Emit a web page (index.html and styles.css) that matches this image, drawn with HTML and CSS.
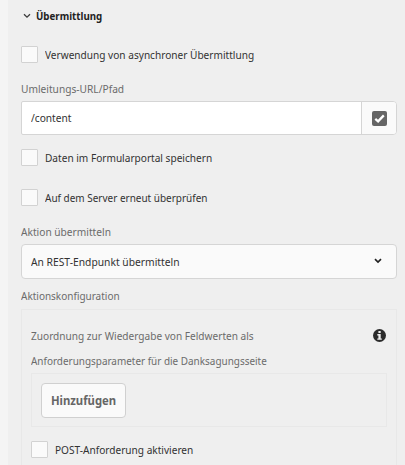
FILE: index.html
```html
<!DOCTYPE html>
<html lang="de">
<head>
<meta charset="utf-8">
<title>Übermittlung</title>
<link rel="stylesheet" href="styles.css">
</head>
<body>
<main class="panel">
  <h2 class="heading"><svg class="chevron" viewBox="0 0 8 6"><path d="M1 1.2 4 4.2 7 1.2"/></svg><span class="text t-head">Übermittlung</span></h2>
  <label class="check"><span class="box"></span><span class="text t-async">Verwendung von asynchroner Übermittlung</span></label>
  <div class="label url-label"><span class="text t-url">Umleitungs-URL/Pfad</span></div>
  <div class="field">
    <div class="value"><span class="text t-content">/content</span></div>
    <div class="picker"><svg viewBox="0 0 15 15"><rect width="15" height="15" rx="2" fill="#656565"/><path d="M3.3 7.9 6.1 10.4 11.8 4.4" fill="none" stroke="#fff" stroke-width="2.3"/></svg></div>
  </div>
  <label class="check portal"><span class="box"></span><span class="text t-portal">Daten im Formularportal speichern</span></label>
  <label class="check server"><span class="box"></span><span class="text t-server">Auf dem Server erneut überprüfen</span></label>
  <div class="label action-label"><span class="text t-action">Aktion übermitteln</span></div>
  <div class="select"><span class="text t-rest">An REST-Endpunkt übermitteln</span><svg class="arrow" viewBox="0 0 8 6"><path d="M1 1.2 4 4 7 1.2"/></svg></div>
  <div class="label config-label"><span class="text t-config">Aktionskonfiguration</span></div>
  <section class="config">
    <div class="mapping">
      <div class="mapping-text"><span class="text t-map1">Zuordnung zur Wiedergabe von Feldwerten als</span><br><span class="text t-map2">Anforderungsparameter für die Danksagungsseite</span></div>
      <svg class="info" viewBox="0 0 13 13"><circle cx="6.5" cy="6.5" r="6.5" fill="#2b2b2b"/><path d="M5.4 2h2.3v2H5.4zM4.3 5.1h3.4v4.3h1.1v1.4H4.3V9.4h1.1V6.5H4.3z" fill="#efefef"/></svg>
    </div>
    <div class="multi"><button class="add"><span class="text t-add">Hinzufügen</span></button></div>
    <label class="check post"><span class="box"></span><span class="text t-post">POST-Anforderung aktivieren</span></label>
  </section>
</main>
</body>
</html>
```
FILE: styles.css
```css
* { box-sizing: border-box; }
body {
  margin: 0;
  height: 465px;
  overflow: hidden;
  background: #f4f4f4;
  font: 11px/16px "Noto Sans", sans-serif;
  color: #323232;
}
svg { display: block; flex: none; }
.panel {
  margin-left: 8px;
  height: 465px;
  overflow: hidden;
  padding: 8px 8px 0 13px;
  background: #efefef;
}

/* Condensed text */
.text { display: inline-block; white-space: nowrap; transform: scaleX(.918); transform-origin: 0 50%; }
.t-head { transform: scaleX(.885); }
.t-url, .t-content, .t-action { transform: scaleX(.925); }
.t-server, .t-config { transform: scaleX(.907); }
.t-rest { transform: scaleX(.935); }
.t-map2 { transform: scaleX(.903); }
.t-add { transform: scaleX(.87); transform-origin: 50% 50%; }

.heading { display: flex; align-items: center; height: 16px; margin: 0; padding-left: 2px; font-size: 11px; color: #222; }
.chevron { width: 8px; height: 6px; margin-right: 5px; }
.chevron path, .arrow path { fill: none; stroke: #3c3c3c; stroke-width: 1.3; }
.check { display: flex; align-items: center; gap: 7px; height: 17px; }
.box { flex: none; width: 17px; height: 17px; border: 1px solid #d2d2d2; border-radius: 1px; background: #fafafa; }
.heading + .check { margin-top: 22px; }
.label { height: 16px; color: #6b6b6b; }
.url-label { margin-top: 18px; }
.field { display: flex; height: 34px; margin-top: 4px; border: 1px solid #d5d5d5; border-radius: 2px 4px 4px 2px; background: #fff; }
.value { flex: 1; padding: 8px 9px; }
.picker { display: flex; align-items: center; justify-content: center; width: 35px; border-left: 1px solid #d5d5d5; border-radius: 0 3px 3px 0; background: #fafafa; }
.picker svg { width: 15px; height: 15px; }
.portal { margin-top: 14px; }
.server { margin-top: 23px; }
.action-label { margin-top: 18px; }
.select { display: flex; align-items: center; justify-content: space-between; height: 35px; margin-top: 4px; padding: 0 14px 0 9px; border: 1px solid #d5d5d5; border-radius: 4px; background: #fafafa; }
.arrow { width: 8px; height: 6px; margin-top: -1px; }
.arrow path { stroke: #222; stroke-width: 1.7; }
.config-label { margin-top: 9px; }
.config { height: 170px; margin-top: 5px; padding: 14px 9px 0; border: 1px solid #e8e8e8; }
.mapping { display: flex; justify-content: space-between; height: 49px; color: #6b6b6b; line-height: 24.5px; }
.info { width: 13px; height: 13px; margin: 5px 1px 0 0; }
.multi { height: 54px; padding: 9px; border: 1px solid #e8e8e8; }
.add { display: flex; align-items: center; justify-content: center; width: 85px; height: 35px; padding: 0 0 2px; border: 1px solid #d0d0d0; border-radius: 4px; background: #fafafa; color: #666; font: bold 13px/18px "Noto Sans", sans-serif; }
.post { margin-top: 14px; }
```
